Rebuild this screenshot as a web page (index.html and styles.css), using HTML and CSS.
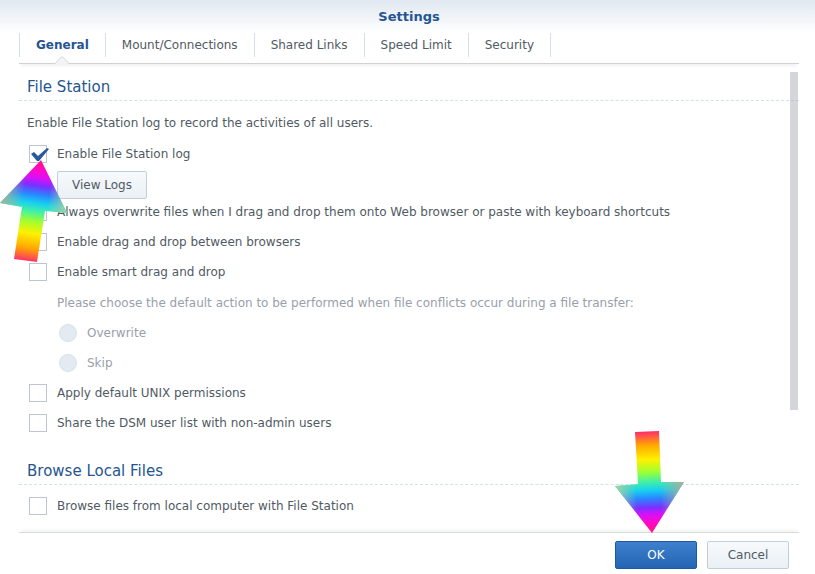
FILE: index.html
```html
<!DOCTYPE html>
<html lang="en">
<head>
    <meta charset="UTF-8">
    <meta name="viewport" content="width=device-width, initial-scale=1.0">
    <title>Settings</title>
    <link rel="stylesheet" href="styles.css">
</head>
<body>
    <div class="window">
        <h1 class="title">Settings</h1>

        <nav class="tabs">
            <button type="button" class="tab active">General
                <svg class="notch" width="14" height="8" viewBox="0 0 14 8"><path d="M0 8 L7 1 L14 8 Z" fill="#f3f4f5"/><path d="M0 7.5 L7 0.5 L14 7.5" fill="none" stroke="#cfd2d5"/></svg>
            </button>
            <button type="button" class="tab">Mount/Connections</button>
            <button type="button" class="tab">Shared Links</button>
            <button type="button" class="tab">Speed Limit</button>
            <button type="button" class="tab">Security</button>
        </nav>

        <form class="form" id="settingsForm">
            <h2>File Station</h2>
            <p class="text">Enable File Station log to record the activities of all users.</p>

            <label class="row"><input type="checkbox" checked>Enable File Station log</label>
            <div class="sub-button"><button type="button" class="btn">View Logs</button></div>
            <label class="row"><input type="checkbox">Always overwrite files when I drag and drop them onto Web browser or paste with keyboard shortcuts</label>
            <label class="row"><input type="checkbox">Enable drag and drop between browsers</label>
            <label class="row"><input type="checkbox">Enable smart drag and drop</label>

            <div class="sub disabled">
                <p class="row">Please choose the default action to be performed when file conflicts occur during a file transfer:</p>
                <label class="row"><input type="radio" name="conflict" disabled>Overwrite</label>
                <label class="row"><input type="radio" name="conflict" disabled>Skip</label>
            </div>

            <label class="row"><input type="checkbox">Apply default UNIX permissions</label>
            <label class="row"><input type="checkbox">Share the DSM user list with non-admin users</label>

            <h2 class="second">Browse Local Files</h2>
            <label class="row local"><input type="checkbox">Browse files from local computer with File Station</label>
            <div class="scrollbar"></div>
        </form>

        <div class="footer">
            <button type="submit" form="settingsForm" class="btn primary">OK</button>
            <button type="button" class="btn">Cancel</button>
        </div>
    </div>

    <svg class="arrow arrow-up" width="68" height="104" viewBox="0 0 68 104">
        <defs>
            <linearGradient id="rainbowUp" gradientUnits="userSpaceOnUse" x1="41" y1="0" x2="26" y2="102">
                <stop offset="0" stop-color="#ff1880"/>
                <stop offset="0.1" stop-color="#ff08c8"/>
                <stop offset="0.18" stop-color="#d810f8"/>
                <stop offset="0.25" stop-color="#7a30ff"/>
                <stop offset="0.34" stop-color="#2888ff"/>
                <stop offset="0.42" stop-color="#18d0f0"/>
                <stop offset="0.5" stop-color="#40f0a8"/>
                <stop offset="0.6" stop-color="#a0ff30"/>
                <stop offset="0.72" stop-color="#fff000"/>
                <stop offset="0.86" stop-color="#ffa800"/>
                <stop offset="1" stop-color="#ff2870"/>
            </linearGradient>
            <linearGradient id="edgeUp" gradientUnits="userSpaceOnUse" x1="0" y1="43" x2="67" y2="53">
                <stop offset="0" stop-color="#a8b098"/>
                <stop offset="0.32" stop-color="#a8b098" stop-opacity="0"/>
                <stop offset="0.7" stop-color="#a8d0a0" stop-opacity="0"/>
                <stop offset="1" stop-color="#a8d0a0"/>
            </linearGradient>
        </defs>
        <path d="M41 0 L67 53 L45 51 L37 102 L14 99 L22 47 L0 43 Z" fill="url(#rainbowUp)"/>
        <path d="M41 0 L67 53 L45 51 L22 47 L0 43 Z" fill="url(#edgeUp)"/>
    </svg>

    <svg class="arrow arrow-down" width="70" height="104" viewBox="0 0 70 104">
        <defs>
            <linearGradient id="rainbowDown" gradientUnits="userSpaceOnUse" x1="37" y1="103" x2="32" y2="1">
                <stop offset="0" stop-color="#ff1880"/>
                <stop offset="0.1" stop-color="#ff08c8"/>
                <stop offset="0.18" stop-color="#d810f8"/>
                <stop offset="0.25" stop-color="#7a30ff"/>
                <stop offset="0.34" stop-color="#2888ff"/>
                <stop offset="0.42" stop-color="#18d0f0"/>
                <stop offset="0.5" stop-color="#40f0a8"/>
                <stop offset="0.6" stop-color="#a0ff30"/>
                <stop offset="0.72" stop-color="#fff000"/>
                <stop offset="0.86" stop-color="#ffa800"/>
                <stop offset="1" stop-color="#ff2870"/>
            </linearGradient>
            <linearGradient id="edgeDown" gradientUnits="userSpaceOnUse" x1="0" y1="56" x2="69" y2="52">
                <stop offset="0" stop-color="#a8d0a0"/>
                <stop offset="0.3" stop-color="#a8c8a0" stop-opacity="0"/>
                <stop offset="0.65" stop-color="#a8b098" stop-opacity="0"/>
                <stop offset="1" stop-color="#a8b098"/>
            </linearGradient>
        </defs>
        <path d="M20 2 L44 1 L46 52 L69 52 L37 103 L0 56 L23 54 Z" fill="url(#rainbowDown)"/>
        <path d="M46 52 L69 52 L37 103 L0 56 L23 54 Z" fill="url(#edgeDown)"/>
    </svg>
</body>
</html>
```

FILE: styles.css
```css
* {
    box-sizing: border-box;
}

body {
    margin: 0;
    position: relative;
    font: 12px/18px Verdana, "DejaVu Sans", sans-serif;
    color: #505a64;
    background: #fff;
}

button, input {
    font: inherit;
    color: inherit;
    margin: 0;
}

p {
    margin: 0;
}

.window {
    min-height: 100vh;
    display: flex;
    flex-direction: column;
    padding: 0 16px 0 19px;
    background: linear-gradient(#e0e8f1, #fff 33px) no-repeat;
}

.title {
    margin: 0;
    padding-top: 8px;
    height: 33px;
    font-size: 13px;
    line-height: 18px;
    text-align: center;
    color: #265591;
}

.tabs {
    display: flex;
    height: 31px;
    border-bottom: 1px solid #cfd2d5;
    box-shadow: 0 4px 3px -2px #f0f1f2;
}

.tab {
    position: relative;
    height: 24px;
    padding: 0 16px;
    border: 0;
    border-right: 1px solid #d3deea;
    background: none;
    cursor: pointer;
}

.tab.active {
    border-left: 1px solid #d3deea;
    font-weight: bold;
    color: #265591;
}

.notch {
    position: absolute;
    left: 50%;
    top: 23px;
    margin-left: -7px;
}

.form {
    position: relative;
    flex: 1;
    padding-top: 13px;
}

h2 {
    margin: 0;
    padding: 0 8px 3px;
    font-size: 15px;
    font-weight: normal;
    line-height: 20px;
    color: #265591;
    border-bottom: 1px dashed #d5e0ec;
}

.text {
    padding: 13px 8px 7px;
}

.row {
    display: flex;
    align-items: center;
    height: 30px;
    padding-left: 10px;
    white-space: nowrap;
}

.row input {
    appearance: none;
    flex: none;
    width: 18px;
    height: 18px;
    margin-right: 10px;
    border: 1px solid #bcc5d2;
    background: #fff;
}

/* tick is a little wider than the box */
.row input:checked::before {
    content: "";
    display: block;
    width: 18px;
    height: 14px;
    margin: 2px 0 0 1px;
    background: #295a9e;
    clip-path: polygon(0 6px, 3px 4px, 7px 8px, 16px 0, 18px 1px, 8px 13px, 6px 13px);
}

.row input[type="radio"] {
    border-color: #d8e1eb;
    border-radius: 50%;
    background: #e4eaf2;
}

.sub-button {
    height: 28px;
    padding: 2px 0 0 38px;
    line-height: 0;
}

.sub {
    padding: 1px 0 0 30px;
}

.sub p {
    padding-left: 8px;
}

.disabled {
    color: #98a0aa;
}

.second {
    margin-top: 23px;
}

.local {
    margin-top: 6px;
}

.btn {
    height: 28px;
    min-width: 82px;
    padding: 0 14px;
    line-height: 18px;
    border: 1px solid #c3cedb;
    border-radius: 2px;
    background: linear-gradient(#f7fafd, #eaf0f5);
    cursor: pointer;
}

.primary {
    border-color: #1c58a3;
    background: linear-gradient(#3e80cd, #2365b3);
    color: #fff;
}

.scrollbar {
    position: absolute;
    top: 8px;
    right: 1px;
    width: 8px;
    height: 338px;
    background: rgba(160, 165, 170, 0.45);
}

.footer {
    display: flex;
    justify-content: flex-end;
    gap: 10px;
    height: 42px;
    padding: 8px 10px 0 0;
    border-top: 1px solid #d8dadc;
    box-shadow: 0 -4px 3px -2px #f2f3f4;
}

.arrow {
    position: absolute;
}

.arrow-up {
    left: 0;
    top: 160px;
}

.arrow-down {
    left: 615px;
    top: 430px;
}
```
